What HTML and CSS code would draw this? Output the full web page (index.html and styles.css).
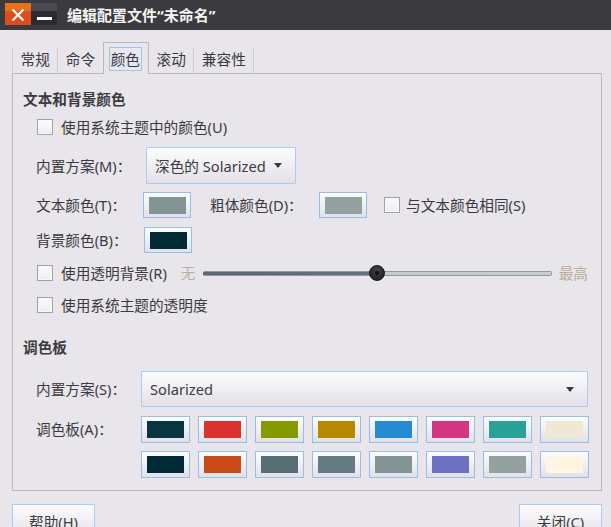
FILE: index.html
```html
<!DOCTYPE html>
<html lang="zh-CN">
<head>
<meta charset="utf-8">
<title>编辑配置文件</title>
<link rel="stylesheet" href="styles.css">
</head>
<body>
<div class="titlebar">
  <div class="wbtns">
    <div class="wbtn close"><svg width="26" height="22" viewBox="0 0 26 22"><path d="M7.5 6.5 L18.5 17.5 M18.5 6.5 L7.5 17.5" stroke="#fff" stroke-width="2.2" fill="none"/></svg></div>
    <div class="wbtn min"><span class="minbar"></span></div>
  </div>
  <div class="title">编辑配置文件“未命名”</div>
</div>
<div class="main">
  <div class="tabs">
    <div class="tab first">常规</div>
    <div class="tab">命令</div>
    <div class="tab active"><span class="focus">颜色</span></div>
    <div class="tab">滚动</div>
    <div class="tab">兼容性</div>
  </div>
  <div class="panel">
    <div class="heading h1">文本和背景颜色</div>
    <div class="cbrow r-sys"><span class="cb"></span><span>使用系统主题中的颜色(U)</span></div>
    <div class="row r-scheme">
      <span class="label w110">内置方案(M)：</span>
      <div class="combo small"><span>深色的 Solarized</span><span class="arrow"></span></div>
    </div>
    <div class="row r-text">
      <span class="label w107">文本颜色(T)：</span>
      <div class="cbtn"><span class="sw" style="background:#839496"></span></div>
      <span class="label w109 ml19">粗体颜色(D)：</span>
      <div class="cbtn"><span class="sw" style="background:#93a1a1"></span></div>
      <span class="cb ml17"></span><span class="ml6">与文本颜色相同(S)</span>
    </div>
    <div class="row r-bg">
      <span class="label w108">背景颜色(B)：</span>
      <div class="cbtn"><span class="sw" style="background:#002b36"></span></div>
    </div>
    <div class="cbrow r-trans">
      <span class="cb"></span><span>使用透明背景(R)</span>
      <span class="dim ml14">无</span>
      <div class="slider"><div class="groove"><span class="handle"><span class="dot"></span></span></div></div>
      <span class="dim">最高</span>
    </div>
    <div class="cbrow r-systrans"><span class="cb"></span><span>使用系统主题的透明度</span></div>

    <div class="heading h2">调色板</div>
    <div class="row r-scheme2">
      <span class="label w105">内置方案(S)：</span>
      <div class="combo wide"><span>Solarized</span><span class="arrow"></span></div>
    </div>
    <div class="row r-pal">
      <span class="label w105 self-top">调色板(A)：</span>
      <div class="palette">
        <div class="cbtn p"><span class="sw" style="background:#073642"></span></div>
        <div class="cbtn p"><span class="sw" style="background:#dc322f"></span></div>
        <div class="cbtn p"><span class="sw" style="background:#859900"></span></div>
        <div class="cbtn p"><span class="sw" style="background:#b58900"></span></div>
        <div class="cbtn p"><span class="sw" style="background:#268bd2"></span></div>
        <div class="cbtn p"><span class="sw" style="background:#d33682"></span></div>
        <div class="cbtn p"><span class="sw" style="background:#2aa198"></span></div>
        <div class="cbtn p"><span class="sw" style="background:#eee8d5"></span></div>
        <div class="cbtn p"><span class="sw" style="background:#002b36"></span></div>
        <div class="cbtn p"><span class="sw" style="background:#cb4b16"></span></div>
        <div class="cbtn p"><span class="sw" style="background:#586e75"></span></div>
        <div class="cbtn p"><span class="sw" style="background:#657b83"></span></div>
        <div class="cbtn p"><span class="sw" style="background:#839496"></span></div>
        <div class="cbtn p"><span class="sw" style="background:#6c71c4"></span></div>
        <div class="cbtn p"><span class="sw" style="background:#93a1a1"></span></div>
        <div class="cbtn p"><span class="sw" style="background:#fdf6e3"></span></div>
      </div>
    </div>
  </div>
  <div class="footer">
    <div class="pbtn">帮助(H)</div>
    <div class="pbtn">关闭(C)</div>
  </div>
</div>
</body>
</html>
```

FILE: styles.css
```css
* { box-sizing: border-box; }
html, body { margin: 0; padding: 0; }
body {
  width: 611px;
  height: 527px;
  overflow: hidden;
  background: #e8e5eb;
  font-family: "Noto Sans", "Noto Sans CJK SC", sans-serif;
  font-size: 14.67px;
  line-height: 20px;
  color: #3c3a3f;
}

/* title bar */
.titlebar {
  height: 30px;
  background: #3b3a3f;
  display: flex;
  align-items: flex-start;
}
.wbtns { display: flex; margin: 3px 0 0 5px; }
.wbtn { width: 26px; height: 22px; display: flex; align-items: center; justify-content: center; }
.wbtn svg { display: block; }
.close { background: linear-gradient(#e8701a 0, #e8701a 8px, #de4e1c 8px, #de4e1c 100%); }
.min { background: linear-gradient(#4b4a52 0, #4b4a52 8px, #2c2b31 8px, #2c2b31 100%); align-items: flex-start; }
.minbar { width: 15px; height: 3px; background: #fff; margin-top: 14px; }
.title {
  margin-left: 10px;
  color: #f4f4f4;
  font-weight: bold;
  font-size: 15px;
  line-height: 30px;
}

/* main */
.main { padding: 12px 9px 0 12px; }
.tabs {
  display: flex;
  align-items: flex-end;
  height: 31px;
}
.tab {
  height: 25px;
  line-height: 23px;
  padding: 0 7.5px;
  border-right: 1px solid #cfccd3;
}
.tab.first { border-left: 1px solid #cfccd3; }
.tab.active {
  position: relative;
  z-index: 1;
  height: 32px;
  margin-bottom: -1px;
  margin-left: -1px;
  padding: 4px 6px 0 5px;
  border: 1px solid #bbb8bf;
  border-bottom: none;
  background: #e8e5eb;
  line-height: 20px;
}
.focus {
  display: block;
  height: 24px;
  line-height: 22px;
  padding: 0 1px;
  border: 1px solid #a2c3e6;
  background: #e6e8f2;
}

.panel {
  height: 418px;
  border: 1px solid #bbb8bf;
  padding: 0 13px 0 10px;
}
.heading { font-weight: bold; height: 20px; }
.h1 { margin-top: 15px; }
.h2 { margin-top: 22px; }

.row { display: flex; align-items: center; padding-left: 13px; }
.cbrow { display: flex; align-items: center; height: 20px; padding-left: 14px; }
.cbrow .cb { margin-right: 8px; }
.r-sys { margin-top: 8px; }
.r-scheme { margin-top: 10px; height: 37px; }
.r-text { margin-top: 8px; height: 26px; }
.r-bg { margin-top: 9px; height: 26px; }
.r-trans { margin-top: 10px; }
.r-systrans { margin-top: 12px; }
.r-scheme2 { margin-top: 14px; height: 36px; }
.r-pal { margin-top: 9px; align-items: flex-start; }
.self-top { margin-top: 3px; }

.label { white-space: nowrap; flex: none; }
.w105 { width: 105px; }
.w107 { width: 107px; }
.w108 { width: 108px; }
.w109 { width: 109px; }
.w110 { width: 110px; }
.ml6 { margin-left: 6px; }
.ml14 { margin-left: 14px; }
.ml17 { margin-left: 17px; }
.ml19 { margin-left: 19px; }

.cb {
  flex: none;
  width: 16px;
  height: 16px;
  border: 1px solid #a3a2a8;
  background: linear-gradient(#fdfdfd, #ecebef);
  box-shadow: inset 0 0 0 1px #f7f7f8;
}

.combo {
  display: flex;
  align-items: center;
  justify-content: space-between;
  border: 1px solid #a9cdf2;
  border-radius: 1px;
  background: linear-gradient(#fcfcfd, #e3e0e8);
  padding: 0 13px 0 8px;
}
.combo.small { width: 150px; height: 37px; }
.combo.wide { width: 447px; height: 36px; padding-right: 13px; }
.arrow {
  width: 0; height: 0;
  border-top: 5px solid #3a393e;
  border-left: 4.5px solid transparent;
  border-right: 4.5px solid transparent;
}

.cbtn {
  flex: none;
  width: 48px;
  height: 26px;
  border: 1px solid #93bfe9;
  background: linear-gradient(#fdfdfe, #e2e0e8);
  display: flex;
  align-items: center;
  justify-content: center;
}
.cbtn.p { width: 49px; height: 27px; }
.sw { display: block; width: 37px; height: 17px; }

.dim { color: #bbae9a; flex: none; }
.slider { flex: 1; margin: 0 7px; display: flex; align-items: center; height: 20px; }
.groove {
  position: relative;
  flex: 1;
  height: 5px;
  border-radius: 2px;
  background: linear-gradient(to right, #5b6772 0, #66727c 50%, #c3cad0 50%, #c8ced3 100%);
  border: 1px solid #8d98a2;
  border-left-color: #56616b;
}
.handle {
  position: absolute;
  left: calc(50% - 8px);
  top: -7px;
  width: 16px;
  height: 16px;
  border-radius: 50%;
  background: radial-gradient(circle at 50% 35%, #45454a 0, #2a2a2e 60%, #1d1d20 100%);
  border: 1px solid #18181b;
  display: flex;
  align-items: center;
  justify-content: center;
}
.dot { width: 4px; height: 4px; border-radius: 50%; background: #0f0f11; }

.palette {
  display: grid;
  grid-template-columns: repeat(8, 49px);
  column-gap: 8px;
  row-gap: 8px;
}

.footer {
  display: flex;
  justify-content: space-between;
  margin-top: 13px;
}
.pbtn {
  width: 83px;
  height: 36px;
  border: 1px solid #a9cdf2;
  background: linear-gradient(#fcfcfd, #e3e0e8);
  text-align: center;
  line-height: 34px;
}
```
